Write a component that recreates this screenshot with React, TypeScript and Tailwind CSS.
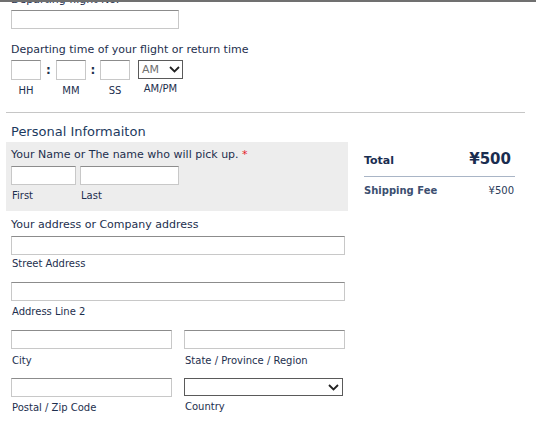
import React from "react";

const inputCls =
  "block h-[19px] bg-white border border-[#c8c8c8] border-t-[#8c8c8c]";

function Chevron() {
  return (
    <svg width="11" height="7" viewBox="0 0 11 7" className="block">
      <path d="M1 1 L5.5 5.5 L10 1" fill="none" stroke="#222" strokeWidth="1.8" />
    </svg>
  );
}

export default function App() {
  return (
    <div className="w-[536px] h-[426px] overflow-hidden bg-white border-t-2 border-[#707070] font-['DejaVu_Sans',Verdana,sans-serif] text-[#1d2f4e]">
      {/* Top section */}
      <div className="pl-[11px]">
        <div className="mt-[-9px] text-[11px] leading-[13px]">Departing flight No.</div>
        <div className={`${inputCls} mt-[4px] w-[168px]`} />
        <div className="mt-[14px] text-[11px] leading-[13px]">
          Departing time of your flight or return time
        </div>
        <div className="mt-[4px] flex items-start">
          <div className="flex flex-col items-center w-[30px]">
            <div className={`${inputCls} h-[20px] w-[30px]`} />
            <div className="mt-[5px] text-[10px] leading-[12px]">HH</div>
          </div>
          <div className="w-[15px] h-[20px] flex items-center justify-center text-[12px] font-bold leading-none">:</div>
          <div className="flex flex-col items-center w-[30px]">
            <div className={`${inputCls} h-[20px] w-[30px]`} />
            <div className="mt-[5px] text-[10px] leading-[12px]">MM</div>
          </div>
          <div className="w-[14px] h-[20px] flex items-center justify-center text-[12px] font-bold leading-none">:</div>
          <div className="flex flex-col items-center w-[30px]">
            <div className={`${inputCls} h-[20px] w-[30px]`} />
            <div className="mt-[5px] text-[10px] leading-[12px]">SS</div>
          </div>
          <div className="ml-[8px] flex flex-col items-center w-[45px]">
            <div className="h-[19px] w-[45px] border border-[#5a5a5a] flex items-center justify-between pl-[3px] pr-[2px]">
              <span className="text-[11px] leading-none text-[#707070]">AM</span>
              <Chevron />
            </div>
            <div className="mt-[4px] text-[10px] leading-[12px]">AM/PM</div>
          </div>
        </div>
      </div>

      <div className="mt-[15px] ml-[6px] w-[519px] h-px bg-[#c6c6c6]" />

      {/* Bottom section */}
      <div className="flex pl-[6px]">
        <div className="w-[342px]">
          <div className="mt-[11px] pl-[5px] text-[13px] leading-[16px] text-[#1c3a60]">
            Personal Informaiton
          </div>
          <div className="mt-[2px] bg-[#ededed] px-[5px] pt-[6px] pb-[9px]">
            <div className="text-[11px] leading-[13px]">
              Your Name or The name who will pick up. <span className="text-[#e5202a]">*</span>
            </div>
            <div className="mt-[5px] flex gap-[4px]">
              <div className="flex flex-col w-[65px]">
                <div className={`${inputCls} w-[65px]`} />
                <div className="mt-[5px] pl-px text-[10px] leading-[12px]">First</div>
              </div>
              <div className="flex flex-col w-[99px]">
                <div className={`${inputCls} w-[99px]`} />
                <div className="mt-[5px] pl-px text-[10px] leading-[12px]">Last</div>
              </div>
            </div>
          </div>

          <div className="px-[5px]">
            <div className="mt-[7px] text-[11px] leading-[13px]">Your address or Company address</div>
            <div className={`${inputCls} mt-[5px] w-[334px]`} />
            <div className="mt-[3px] pl-px text-[10px] leading-[12px]">Street Address</div>
            <div className={`${inputCls} mt-[12px] w-[334px]`} />
            <div className="mt-[5px] pl-px text-[10px] leading-[12px]">Address Line 2</div>

            <div className="mt-[12px] flex gap-[12px]">
              <div className="w-[161px]">
                <div className={`${inputCls} w-[161px]`} />
                <div className="mt-[6px] pl-px text-[10px] leading-[12px]">City</div>
              </div>
              <div className="w-[161px]">
                <div className={`${inputCls} w-[161px]`} />
                <div className="mt-[6px] pl-px text-[10px] leading-[12px]">State / Province / Region</div>
              </div>
            </div>

            <div className="mt-[11px] flex gap-[12px]">
              <div className="w-[161px]">
                <div className={`${inputCls} w-[161px]`} />
                <div className="mt-[5px] pl-px text-[10px] leading-[12px]">Postal / Zip Code</div>
              </div>
              <div className="w-[161px]">
                <div className="h-[18px] w-[159px] border border-[#5a5a5a] flex items-center justify-end pr-[3px]">
                  <Chevron />
                </div>
                <div className="mt-[5px] pl-px text-[10px] leading-[12px]">Country</div>
              </div>
            </div>
          </div>
        </div>

        <div className="ml-[16px] w-[151px] mt-[37px]">
          <div className="flex items-baseline justify-between pb-[6px] border-b border-[#a9b5c6]">
            <span className="text-[11px] font-bold leading-[18px] text-[#1a2d50]">Total</span>
            <span className="mr-[4px] text-[15px] font-bold leading-[18px] text-[#1a2d50]">¥500</span>
          </div>
          <div className="mt-[8px] flex items-baseline justify-between">
            <span className="text-[10px] font-bold leading-[12px] text-[#3c4f70]">Shipping Fee</span>
            <span className="mr-px text-[10px] leading-[12px] text-[#2a3a58]">¥500</span>
          </div>
        </div>
      </div>
    </div>
  );
}
